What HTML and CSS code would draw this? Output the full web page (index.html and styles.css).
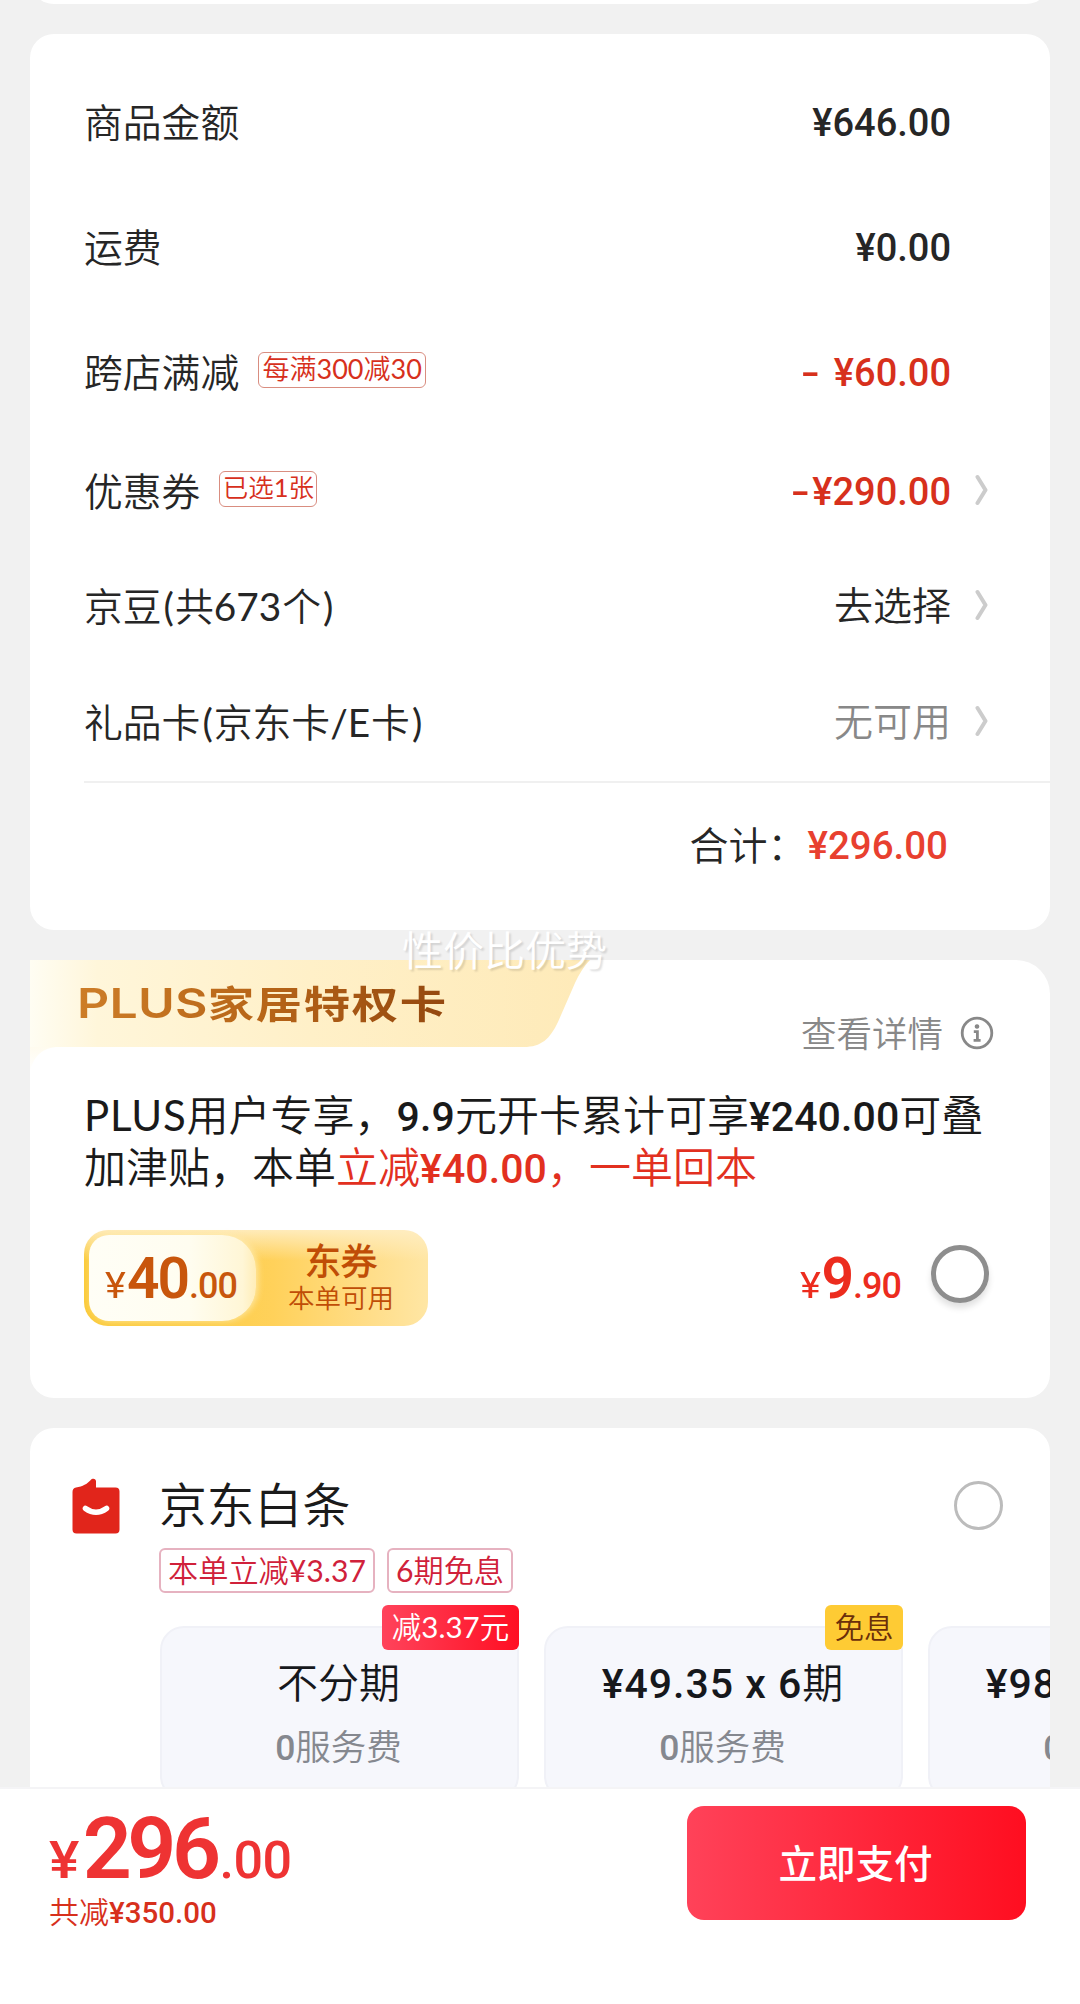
FILE: index.html
```html
<!DOCTYPE html>
<html lang="zh-CN">
<head>
<meta charset="utf-8">
<title>确认订单</title>
<link rel="stylesheet" href="styles.css">
</head>
<body>
<main class="scroll">
  <section class="card card-prev"></section>

  <section class="card summary">
    <div class="row"><span class="label">商品金额</span><span class="num amount">¥646.00</span></div>
    <div class="row"><span class="label">运费</span><span class="num amount">¥0.00</span></div>
    <div class="row"><span class="label">跨店满减</span><span class="tag tag-full">每满300减30</span><span class="num amount red"><span class="minus minus-wide">-</span>¥60.00</span></div>
    <div class="row row-coupon"><span class="label">优惠券</span><span class="tag tag-picked">已选1张</span><span class="num amount red"><span class="minus">-</span>¥290.00</span>
      <svg class="chevron" viewBox="0 0 14 32"><path d="M2.5 3 L10.5 16 L2.5 29"/></svg></div>
    <div class="row row-bean"><span class="label">京豆<span class="paren">(</span>共673<span class="unit">个</span>)</span><span class="amount text">去选择</span>
      <svg class="chevron" viewBox="0 0 14 32"><path d="M2.5 3 L10.5 16 L2.5 29"/></svg></div>
    <div class="row row-gift"><span class="label">礼品卡<span class="paren">(</span>京东卡/E<span class="unit">卡</span>)</span><span class="amount text muted">无可用</span>
      <svg class="chevron" viewBox="0 0 14 32"><path d="M2.5 3 L10.5 16 L2.5 29"/></svg></div>
    <div class="total"><span class="total-label">合计：</span><span class="num total-value">¥296.00</span></div>
  </section>

  <section class="card plus">
    <div class="watermark">性价比优势</div>
    <div class="plus-head">
      <div class="ribbon">
        <svg class="ribbon-bg" viewBox="0 0 560 126" preserveAspectRatio="none">
          <defs>
            <linearGradient id="rb" x1="0" x2="1" y1="0" y2="0">
              <stop offset="0" stop-color="#fffdf3"/><stop offset=".12" stop-color="#fff6da"/>
              <stop offset=".5" stop-color="#fff0c8"/><stop offset="1" stop-color="#feeab8"/>
            </linearGradient>
            <linearGradient id="fd" x1="0" x2="0" y1="0" y2="1">
              <stop offset="0" stop-color="#fffaea"/><stop offset="1" stop-color="#ffffff"/>
            </linearGradient>
          </defs>
          <path fill="url(#fd)" d="M0 80 H26 V87 C10 89 3 98 0 112 Z"/>
          <path fill="url(#rb)" d="M0 0 H560 C554 6 549 14 545 23 L528 62 C520 79 511 87 494 87 H0 Z"/>
        </svg>
        <span class="ribbon-text"><span class="ribbon-latin">PLUS</span>家居特权卡</span>
      </div>
      <div class="detail">
        <span>查看详情</span>
        <svg class="info" viewBox="0 0 34 34">
          <circle cx="17" cy="17" r="14.8"/>
          <path class="dot" d="M17 8.2a2.3 2.3 0 1 0 .01 0Z"/>
          <path class="stem" d="M13.8 15.6h3.6v8.4M13.6 24.4h7"/>
        </svg>
      </div>
    </div>
    <p class="desc"><span class="plus-word">PLUS</span>用户专享，<b>9.9</b>元开卡累计可享<b>¥240.00</b>可叠<br>加津贴，本单<span class="hot">立减<b>¥40.00</b>，一单回本</span></p>
    <div class="offer">
      <div class="coupon">
        <div class="coupon-value num"><span class="yen">¥</span><strong>40</strong><span class="cents">.00</span></div>
        <div class="coupon-info"><span class="coupon-name">东券</span><span class="coupon-use">本单可用</span></div>
      </div>
      <div class="offer-price num"><span class="yen">¥</span><strong>9</strong><span class="cents">.90</span></div>
      <span class="radio radio-big"></span>
    </div>
  </section>

  <section class="card baitiao">
    <div class="bt-head">
      <svg class="bt-icon" viewBox="0 0 48 56">
        <path fill="#e1251b" d="M4 9.5 C11 8.5 15 6 18.500 2.300 C20.500 0 24 .5 24 3.500 V9.500 H43.500 Q47.500 9.500 47.500 13.500 V51.500 Q47.500 55.500 43.500 55.500 H4.500 Q.5 55.500 .5 51.500 V14 Q.5 10 4 9.500Z"/>
        <path fill="none" stroke="#fff" stroke-width="5.600" stroke-linecap="round" d="M13.500 30.500 Q24 38 34.500 30.500"/>
      </svg>
      <h2>京东白条</h2>
      <span class="radio radio-small"></span>
    </div>
    <div class="bt-tags"><span class="bt-tag bt-cut">本单立减¥3.37</span><span class="bt-tag bt-free">6期免息</span></div>
    <div class="plans">
      <div class="plan"><span class="badge badge-red">减3.37元</span><div class="plan-title">不分期</div><div class="plan-fee"><b>0</b>服务费</div></div>
      <div class="plan"><span class="badge badge-gold">免息</span><div class="plan-title"><b>¥49.35 x 6</b>期</div><div class="plan-fee"><b>0</b>服务费</div></div>
      <div class="plan"><div class="plan-title"><b>¥98.69 x 3</b>期</div><div class="plan-fee"><b>0</b>服务费</div></div>
    </div>
  </section>
</main>

<footer class="paybar">
  <div class="pay-info">
    <div class="pay-price num"><span class="yen">¥</span><strong>296</strong><span class="cents">.00</span></div>
    <div class="pay-cut">共减<b>¥350.00</b></div>
  </div>
  <button class="pay-button">立即支付</button>
</footer>
</body>
</html>
```

FILE: styles.css
```css
* { box-sizing: border-box; }

body {
  margin: 0;
  width: 1080px;
  height: 2004px;
  display: flex;
  flex-direction: column;
  overflow: hidden;
  background: #f1f1f1;
  color: #262626;
  font-family: Lato, "Noto Sans CJK SC DemiLight", "Noto Sans CJK SC", sans-serif;
  font-weight: 400;
}

.num, b {
  font-family: Roboto, "Noto Sans CJK SC", sans-serif;
  font-weight: 500;
}

.scroll {
  height: 1787px;
  flex: none;
  overflow: hidden;
  display: flex;
  flex-direction: column;
  gap: 30px;
  padding: 0 30px;
}

.card {
  flex: none;
  background: #fff;
  border-radius: 24px;
}

.card-prev { height: 50px; margin-top: -46px; }

/* order summary */
.summary { height: 896px; padding: 26px 0 0 54px; }

.row {
  display: flex;
  align-items: center;
  height: 125px;
  padding-right: 99px;
  font-size: 38.800px;
  line-height: 50px;
}
.row-coupon { height: 113px; }
.row-bean { height: 117px; }
.row-gift { height: 116px; }
.row-coupon, .row-bean, .row-gift { padding-right: 61px; }

.label { padding-bottom: 2px; }
.paren { margin: 0 1px 0 2px; }
.unit { margin: 0 2px 0 1px; }
.amount { margin-left: auto; font-size: 38px; }
.text { padding-bottom: 4px; font-size: 39px; }
.red { color: #d7301c; }
.minus { display: inline-block; width: 21px; transform: scaleX(1.45); transform-origin: 0 50%; }
.minus-wide { width: 33px; }
.muted { color: #888; }

.chevron { width: 14px; height: 32px; margin: 0 0 4px 24px; fill: none; stroke: #ccc; stroke-width: 4; stroke-linecap: round; stroke-linejoin: round; }

.tag {
  height: 36px;
  margin: -6px 0 0 19px;
  border: 1px solid #d98d80;
  border-radius: 6px;
  color: #d7301c;
  font-size: 27px;
  line-height: 31px;
  white-space: nowrap;
  display: flex;
  justify-content: center;
}
.tag-full { width: 168px; }
.tag-picked { width: 98px; font-size: 25.500px; }

.total {
  display: flex;
  justify-content: flex-end;
  align-items: center;
  height: 128px;
  padding-right: 102px;
  border-top: 2px solid #f0f0f0;
  font-size: 39px;
  line-height: 50px;
}
.total-label { padding: 0 1px 2px 0; }
.total-value { color: #e8402f; font-size: 38.500px; }

/* membership offer */
.plus {
  position: relative;
  height: 438px;
  border-radius: 0 34px 24px 24px;
}

.watermark {
  position: absolute;
  left: 372px;
  top: -34px;
  color: #fff;
  font-size: 41px;
  font-weight: 400;
  line-height: 50px;
  text-shadow: 2px 2px 2px rgba(0, 0, 0, .13);
}

.plus-head { display: flex; justify-content: space-between; height: 126px; }
.ribbon { display: grid; width: 560px; height: 126px; }
.ribbon-bg, .ribbon-text { grid-area: 1 / 1; }
.ribbon-bg { width: 560px; height: 126px; }
.ribbon-text {
  align-self: start;
  justify-self: start;
  margin: 17px 0 0 47px;
  font-family: "Noto Sans CJK SC", sans-serif;
  font-size: 38px;
  font-weight: 700;
  line-height: 50px;
  letter-spacing: 1.300px;
  transform: scaleX(1.22);
  transform-origin: 0 50%;
  background: linear-gradient(90deg, #cd7d27, #b76518 50%, #94480f);
  background-clip: text;
  -webkit-background-clip: text;
  color: transparent;
}
.ribbon-latin { font-family: Inter, sans-serif; font-size: 41px; font-weight: 600; letter-spacing: .2px; }

.detail {
  display: flex;
  align-items: center;
  height: 50px;
  margin: 49px 56px 0 0;
  color: #888;
  font-size: 35.500px;
  line-height: 50px;
}
.info { width: 34px; height: 34px; margin: -2px 0 0 17px; fill: none; stroke: #888; stroke-width: 2.800; }
.info .dot { fill: #888; stroke: none; }

.desc {
  margin: 4px 0 0 54px;
  color: #1a1a1a;
  font-size: 42px;
  line-height: 51.500px;
  white-space: nowrap;
}
.desc b { font-size: 41px; line-height: 0; letter-spacing: .1px; }
.plus-word { letter-spacing: .8px; }
.hot { color: #e2301f; }

.offer {
  display: flex;
  height: 96px;
  margin: 37px 0 0 54px;
}
.num strong { font-weight: 600; line-height: 1; }
.yen { display: inline-block; transform: scaleX(1.1); transform-origin: 0 50%; }

.coupon {
  display: grid;
  grid-template: 86px / 167px 1fr;
  width: 344px;
  height: 96px;
  padding: 5px 0 5px 5px;
  border-radius: 24px;
  background:
    linear-gradient(180deg, rgba(255, 238, 196, .9), rgba(255, 238, 196, 0) 32%),
    linear-gradient(90deg, #fbcb3c, #fdcf4e 40%, #ffd15a 55%, #ffdc84 80%, #ffe6a4);
}
.coupon-value {
  border-radius: 20px 34px 34px 20px;
  background: linear-gradient(90deg, #fffef6, #fffdf0 60%, #fff6d6 92%, #ffedb8);
  box-shadow: 2px 0 6px rgba(255, 236, 180, .8);
  padding-left: 16px;
  line-height: 102px;
  color: #c8560c;
  white-space: nowrap;
}
.coupon .yen, .coupon .cents, .offer-price .yen, .offer-price .cents { font-size: 36px; }
.coupon .yen, .offer-price .yen { font-weight: 400; }
.coupon strong, .offer-price strong { margin: 0 1px 0 3px; font-size: 57px; letter-spacing: -2px; }
.coupon .cents, .offer-price .cents { letter-spacing: -1px; }
.coupon-info {
  display: flex;
  flex-direction: column;
  align-items: center;
  padding-right: 2px;
  color: #c04d06;
}
.coupon-name { margin-top: 5px; font-size: 36px; font-weight: 700; line-height: 42px; }
.coupon-use { font-size: 26.500px; line-height: 32px; }

.offer-price { margin-left: auto; color: #ec2c1e; line-height: 112px; }

.radio { flex: none; border-radius: 50%; }
.radio-big {
  width: 58px;
  height: 58px;
  margin: 15px 61px 0 30px;
  border: 5px solid #8e8e8e;
  box-shadow: 0 5px 6px rgba(0, 0, 0, .12);
}

/* credit payment */
.baitiao { height: 420px; padding-left: 42px; overflow: hidden; }
.bt-head { display: flex; align-items: center; height: 120px; padding: 34px 47px 0 0; }
.bt-icon { width: 48px; height: 56px; margin-top: 2px; }
.bt-head h2 { margin: 0 0 0 39px; color: #1a1a1a; font-size: 47.800px; font-weight: 400; line-height: 60px; }
.radio-small { width: 49px; height: 49px; margin-left: auto; border: 3px solid #bcbcbc; }

.bt-tags { display: flex; gap: 12px; margin-left: 87px; }
.bt-tag {
  height: 45px;
  border: 2px solid #e6b2c0;
  border-radius: 6px;
  color: #d0213a;
  font-size: 30.200px;
  line-height: 40px;
  text-align: center;
}
.bt-cut { width: 216px; }
.bt-free { width: 126px; }

.plans { display: flex; gap: 25px; margin: 33px 0 0 88px; }
.plan {
  position: relative;
  flex: none;
  width: 359px;
  height: 174px;
  padding: 30px 2px 0 0;
  border: 2px solid #f0f1f7;
  border-radius: 24px;
  background: #f6f7fc;
  text-align: center;
}
.plan-title { color: #16181c; font-size: 41px; line-height: 50px; }
.plan-title b { letter-spacing: 1px; }
.plan-title b, .plan-fee b { line-height: 0; }
.plan-fee { margin-top: 14px; color: #85888f; font-size: 35.500px; line-height: 50px; }

.badge {
  position: absolute;
  top: -23px;
  right: -2px;
  height: 45px;
  border-radius: 6px;
  font-size: 29.500px;
  line-height: 44px;
}
.badge-red { width: 137px; background: linear-gradient(90deg, #ff435b, #ff0f23); color: #fff; }
.badge-gold { width: 78px; background: #fecb34; color: #6b2f0a; }

/* bottom bar */
.paybar {
  display: flex;
  justify-content: space-between;
  height: 217px;
  padding: 17px 54px 0 49px;
  border-top: 2px solid #f4f4f6;
  background: #fff;
}
.pay-price { height: 85px; color: #ee3333; line-height: 88px; white-space: nowrap; }
.pay-price .yen, .pay-price .cents { font-size: 52px; }
.pay-price .cents { letter-spacing: -.5px; }
.pay-price strong { margin: 0 3px 0 6px; font-size: 86px; letter-spacing: -4.500px; }
.pay-cut { color: #d7301c; font-size: 30px; line-height: 40px; }
.pay-cut b { font-size: 29.500px; line-height: 0; }

.pay-button {
  width: 339px;
  height: 114px;
  padding: 0 2px 4px 0;
  border: 0;
  border-radius: 17px;
  background: linear-gradient(90deg, #ff4259, #ff0e20);
  color: #fff;
  font: 500 38.500px/110px "Noto Sans CJK SC", sans-serif;
}
```
